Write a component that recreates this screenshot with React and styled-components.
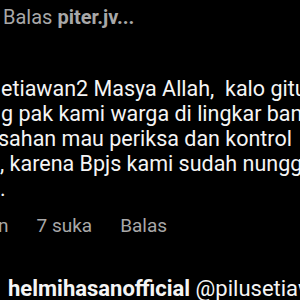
import React from "react";
import styled, { createGlobalStyle } from "styled-components";

const GlobalStyle = createGlobalStyle`
  html, body {
    margin: 0;
    padding: 0;
    background: #000;
  }
  body {
    font-family: Roboto, "Liberation Sans", sans-serif;
    -webkit-font-smoothing: antialiased;
  }
`;

const Screen = styled.div`
  width: 300px;
  height: 300px;
  overflow: hidden;
  background: #000;
  padding-top: 3px;
  box-sizing: border-box;
  display: flex;
  flex-direction: column;
`;

const ReplyTo = styled.div`
  font-size: 20px;
  line-height: 28px;
  color: #a8a8a8;
  white-space: pre;
  padding-left: 3px;
  b {
    font-weight: 700;
  }
`;

const Comment = styled.div`
  margin-top: 45px;
  display: flex;
  flex-direction: column;
`;

const Line = styled.div`
  font-size: ${(p) => p.$size || 21.5}px;
  line-height: 25px;
  color: #f5f5f5;
  white-space: pre;
  margin-left: ${(p) => p.$indent || 0}px;
  b {
    font-weight: 700;
  }
`;

const Meta = styled.div`
  margin-top: 13px;
  display: flex;
  gap: 28px;
  font-size: 19px;
  line-height: 24px;
  color: #a8a8a8;
  white-space: pre;
  margin-left: -2px;
`;

const NextComment = styled(Line)`
  margin-top: 38px;
`;

export default function App() {
  return (
    <>
      <GlobalStyle />
      <Screen>
        <ReplyTo>
          Balas <b>piter.jv...</b>
        </ReplyTo>
        <Comment>
          <Line $indent={1}>etiawan2 Masya Allah,  kalo gitu</Line>
          <Line $indent={1}>g pak kami warga di lingkar ban</Line>
          <Line $indent={-2}>sahan mau periksa dan kontrol</Line>
          <Line $indent={0}>, karena Bpjs kami sudah nunggak</Line>
          <Line $indent={0}>.</Line>
        </Comment>
        <Meta>
          <span>n</span>
          <span>7 suka</span>
          <span>Balas</span>
        </Meta>
        <NextComment $indent={8} $size={22}>
          <b>helmihasanofficial</b> @pilusetiawan2
        </NextComment>
      </Screen>
    </>
  );
}
